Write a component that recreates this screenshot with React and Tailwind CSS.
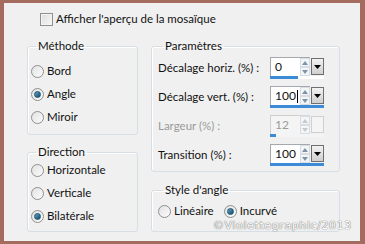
import React from "react";

const FONT = { fontFamily: "Lato, 'Noto Sans', sans-serif" };

function Radio({ checked }) {
  return (
    <span className="relative inline-flex w-[13px] h-[13px] rounded-full border border-[#8f8f8f] bg-gradient-to-br from-[#e2e2e2] to-[#fbfbfb] items-center justify-center shrink-0">
      {checked && (
        <span className="w-[7px] h-[7px] rounded-full bg-gradient-to-br from-[#5fa6c8] to-[#0e4a6a] border border-[#1b5270]" />
      )}
    </span>
  );
}

function RadioRow({ label, checked }) {
  return (
    <div className="flex items-center h-[16px] gap-[3px]">
      <Radio checked={checked} />
      <span className="text-[11.5px] text-[#111] leading-[16px]">{label}</span>
    </div>
  );
}

function Group({ title, className, children }) {
  return (
    <fieldset className={"border border-[#d5dfe5] rounded-[3px] shadow-[inset_1px_1px_0_#fff] " + className}>
      <legend className="ml-[5px] px-[2px] text-[11.5px] leading-[14px] text-[#111]">{title}</legend>
      {children}
    </fieldset>
  );
}

function Spin({ value, pct, disabled, cursor }) {
  const arrow = disabled ? "#c9c9c9" : "#7d94a8";
  return (
    <div className="flex flex-col w-[54px]">
      <div className="flex h-[19px]">
        <div
          className={
            "w-[31px] border-t border-l border-b-0 " +
            (disabled ? "border-[#cfcfcf] bg-[#f4f4f4] text-[#9a9a9a]" : "border-[#a5a8ad] bg-white text-[#111]") +
            " text-[12px] leading-[18px] pl-[4px] flex items-center"
          }
        >
          <span>{value}</span>
          {cursor && <span className="ml-[1px] w-[1px] h-[13px] bg-black" />}
        </div>
        <div
          className={
            "w-[10px] flex flex-col border-t " +
            (disabled ? "border-[#d8d8d8] bg-[#f4f4f4]" : "border-[#a5a8ad] bg-white")
          }
        >
          <div className="flex-1 flex items-center justify-center border border-[#d6dde4] bg-[#f3f5f7]">
            <svg width="6" height="4" viewBox="0 0 6 4"><path d="M0 4 L3 0 L6 4 Z" fill={arrow} /></svg>
          </div>
          <div className="flex-1 flex items-center justify-center border border-[#d6dde4] bg-[#f3f5f7]">
            <svg width="6" height="4" viewBox="0 0 6 4"><path d="M0 0 L3 4 L6 0 Z" fill={arrow} /></svg>
          </div>
        </div>
        <div
          className={
            "w-[13px] h-[17px] mt-[1px] ml-[1px] flex items-center justify-center border " +
            (disabled ? "border-[#d0d0d0] bg-[#f4f4f4]" : "border-[#6f6f6f] bg-gradient-to-b from-[#f2f2f2] to-[#cfcfcf]")
          }
        >
          {!disabled && (
            <svg width="7" height="4" viewBox="0 0 7 4"><path d="M0 0 L3.5 4 L7 0 Z" fill="#000" /></svg>
          )}
        </div>
      </div>
      <div className={"h-[3px] " + (disabled ? "bg-[#f4f4f4]" : "bg-white")}>
        <div className="h-full bg-[#3d8ad6]" style={{ width: pct + "%" }} />
      </div>
    </div>
  );
}

function ParamRow({ label, disabled, ...rest }) {
  return (
    <div className="flex items-center h-[22px]">
      <span className={"w-[112px] text-[11.5px] leading-[14px] " + (disabled ? "text-[#9a9a9a]" : "text-[#111]")}>
        {label}
      </span>
      <Spin disabled={disabled} {...rest} />
    </div>
  );
}

export default function App() {
  return (
    <div className="w-[365px] h-[244px] bg-[#a46b5f] pl-[4px] pt-[3px] pr-[5px] pb-[3px]" style={FONT}>
      <div className="relative w-full h-full bg-[#f0f0f0] flex flex-col">
        <div className="flex items-center pl-[36px] pt-[9px] gap-[3px]">
          <span className="w-[13px] h-[13px] border border-[#8f8f8f] bg-gradient-to-br from-[#dcdcdc] to-[#f8f8f8] shadow-[inset_0_0_0_1px_#f4f4f4]" />
          <span className="text-[11.5px] leading-[14px] text-[#111]">Afficher l'aperçu de la mosaïque</span>
        </div>
        <div className="flex pl-[23px] pt-[13px] gap-[13px]">
          <div className="flex flex-col w-[111px] gap-[10px]">
            <Group title="Méthode" className="h-[96px] pl-[3px]">
              <div className="flex flex-col gap-[7px] pt-[10px]">
                <RadioRow label="Bord" />
                <RadioRow label="Angle" checked />
                <RadioRow label="Miroir" />
              </div>
            </Group>
            <Group title="Direction" className="h-[87px] pl-[3px]">
              <div className="flex flex-col gap-[7px] pt-[3px]">
                <RadioRow label="Horizontale" />
                <RadioRow label="Verticale" />
                <RadioRow label="Bilatérale" checked />
              </div>
            </Group>
          </div>
          <div className="flex flex-col w-[189px] gap-[11px]">
            <Group title="Paramètres" className="h-[133px] pl-[6px]">
              <div className="flex flex-col gap-[7px] pt-[4px]">
                <ParamRow label="Décalage horiz. (%) :" value="0" pct={52} />
                <ParamRow label="Décalage vert. (%) :" value="100" pct={100} cursor />
                <ParamRow label="Largeur (%) :" value="12" pct={12} disabled />
                <ParamRow label="Transition (%) :" value="100" pct={100} />
              </div>
            </Group>
            <Group title="Style d'angle" className="h-[49px] pl-[6px]">
              <div className="flex items-center gap-[10px] pt-[6px]">
                <RadioRow label="Linéaire" />
                <RadioRow label="Incurvé" checked />
              </div>
            </Group>
          </div>
        </div>
        <span
          className="absolute left-[209px] top-[216px] text-[11px] leading-[14px] tracking-[0.6px] text-white [text-shadow:0_0_1px_#6f6f6f,0_0_1px_#6f6f6f]"
          style={{ fontFamily: "'DejaVu Sans', Verdana, sans-serif" }}
        >
          ©Violettegraphic/2013
        </span>
      </div>
    </div>
  );
}
